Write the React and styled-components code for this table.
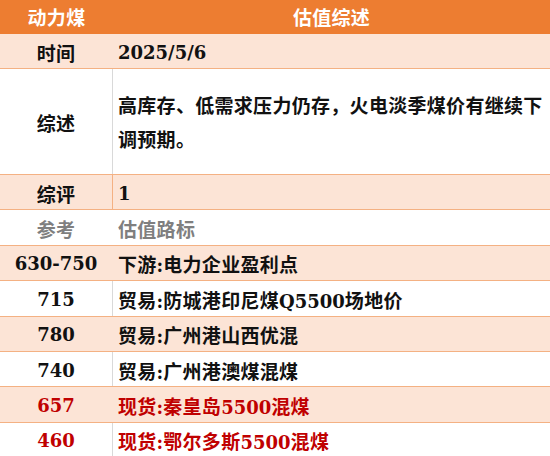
import React from "react";
import styled, { createGlobalStyle } from "styled-components";

const GlobalStyle = createGlobalStyle`
  html, body {
    margin: 0;
    padding: 0;
    background: #ffffff;
  }
  body {
    font-family: "DejaVu Serif", "Noto Sans CJK SC", serif;
  }
`;

const rows = [
  { label: "时间", value: "2025/5/6", bg: "peach" },
  {
    label: "综述",
    value: "高库存、低需求压力仍存，火电淡季煤价有继续下调预期。",
    bg: "white",
    divider: "gray",
    tall: true,
  },
  { label: "综评", value: "1", bg: "peach", divider: "peach" },
  { label: "参考", value: "估值路标", bg: "white", muted: true },
  { label: "630-750", value: "下游:电力企业盈利点", bg: "peach" },
  { label: "715", value: "贸易:防城港印尼煤Q5500场地价", bg: "white", divider: "gray" },
  { label: "780", value: "贸易:广州港山西优混", bg: "peach" },
  { label: "740", value: "贸易:广州港澳煤混煤", bg: "white", divider: "gray" },
  { label: "657", value: "现货:秦皇岛5500混煤", bg: "peach", red: true },
  { label: "460", value: "现货:鄂尔多斯5500混煤", bg: "white", divider: "gray", red: true },
];

const dividerColors = {
  gray: "#d9d9d9",
  peach: "#f4b183",
};

// latin runs get the wider serif digits, the rest falls back to the CJK font
const renderText = (text) =>
  text.split(/([0-9A-Za-z/:\-.]+)/).map((part, i) =>
    /^[0-9A-Za-z/:\-.]+$/.test(part) ? <Num key={i}>{part}</Num> : part
  );

const App = () => {
  return (
    <>
      <GlobalStyle />
      <Table>
        <HeaderRow>
          <HeaderCell>动力煤</HeaderCell>
          <HeaderCell>估值综述</HeaderCell>
        </HeaderRow>
        {rows.map((row) => (
          <Row key={row.label} $bg={row.bg} $tall={row.tall}>
            <LabelCell $red={row.red} $muted={row.muted}>
              {renderText(row.label)}
            </LabelCell>
            <ValueCell
              $red={row.red}
              $muted={row.muted}
              $divider={dividerColors[row.divider]}
              $tall={row.tall}
            >
              <span>{renderText(row.value)}</span>
            </ValueCell>
          </Row>
        ))}
      </Table>
    </>
  );
};

export default App;

const Table = styled.div`
  width: 550px;
  display: flex;
  flex-direction: column;
  font-weight: 700;
  font-size: 19px;
  letter-spacing: 0.3px;
  color: #111111;
`;

const HeaderRow = styled.div`
  display: grid;
  grid-template-columns: 113px 1fr;
  height: 34px;
  background: #ed7d31;
`;

const HeaderCell = styled.div`
  display: flex;
  align-items: center;
  justify-content: center;
  color: #ffffff;
  font-size: 19px;
  padding-bottom: 1px;
`;

const Row = styled.div`
  display: grid;
  grid-template-columns: 112px 1fr;
  box-sizing: border-box;
  height: ${(p) => (p.$tall ? "105.6px" : "35.4px")};
  background: ${(p) => (p.$bg === "peach" ? "#fce4d6" : "#ffffff")};
  border-bottom: 1px solid #f4b183;
  flex-shrink: 0;
`;

const textColor = (p) => (p.$red ? "#c00000" : p.$muted ? "#7f7f7f" : "#111111");

const LabelCell = styled.div`
  display: flex;
  align-items: center;
  justify-content: center;
  padding-top: 2px;
  color: ${textColor};
`;

const ValueCell = styled.div`
  display: flex;
  align-items: center;
  box-sizing: border-box;
  padding: 2px 6px 0 5px;
  border-left: 1px solid ${(p) => p.$divider || "transparent"};
  line-height: ${(p) => (p.$tall ? "34px" : "normal")};
  color: ${textColor};
`;

const Num = styled.span`
  font-family: "DejaVu Serif", serif;
  font-size: 18px;
  letter-spacing: 0;
`;
